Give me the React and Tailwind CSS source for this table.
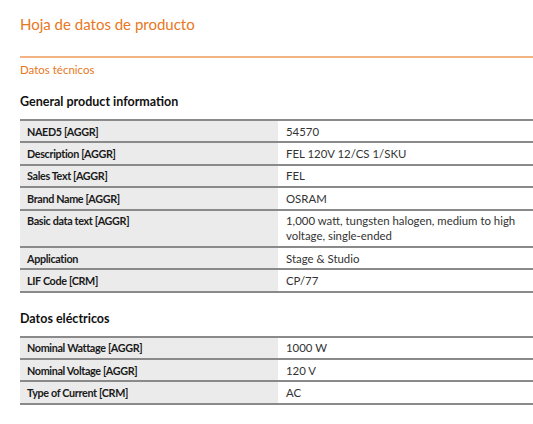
const general = [
  ['NAED5 [AGGR]', '54570'],
  ['Description [AGGR]', 'FEL 120V 12/CS 1/SKU'],
  ['Sales Text [AGGR]', 'FEL'],
  ['Brand Name [AGGR]', 'OSRAM'],
  ['Basic data text [AGGR]', '1,000 watt, tungsten halogen, medium to high voltage, single-ended'],
  ['Application', 'Stage & Studio'],
  ['LIF Code [CRM]', 'CP/77'],
]

const electrical = [
  ['Nominal Wattage [AGGR]', '1000 W'],
  ['Nominal Voltage [AGGR]', '120 V'],
  ['Type of Current [CRM]', 'AC'],
]

function DataTable({ rows }) {
  return (
    <div className="border-t-2 border-[#8a8a8a]">
      {rows.map(([label, value]) => (
        <div key={label} className="flex border-b-2 border-[#8a8a8a] leading-[15px]">
          <div className="w-[258px] shrink-0 bg-[#ebebeb] px-[7px] py-[2.7px] text-[10.8px] font-bold tracking-[-0.35px] text-[#1a1a1a]">{label}</div>
          <div className="flex-1 py-[2.7px] pl-[8px] pr-[6px] text-[11.4px] text-[#333]">{value}</div>
        </div>
      ))}
    </div>
  )
}

export default function App() {
  return (
    <div className="min-h-[424px] bg-white pl-[20px] pt-[13px] font-['Lato','Open_Sans',sans-serif]">
      <h1 className="text-[15px] leading-[22px] text-[#e87722]">Hoja de datos de producto</h1>
      <div className="mt-[21px] h-[2px] bg-[#f4b384]" />
      <p className="mt-[4px] text-[11.5px] leading-[16px] text-[#e87722]">Datos técnicos</p>

      <h2 className="mt-[14px] text-[12.5px] font-bold leading-[20px] text-[#111]">General product information</h2>
      <div className="mt-[7px]">
        <DataTable rows={general} />
      </div>

      <h2 className="mt-[16px] text-[12.5px] font-bold leading-[20px] text-[#111]">Datos eléctricos</h2>
      <div className="mt-[7px]">
        <DataTable rows={electrical} />
      </div>
    </div>
  )
}
